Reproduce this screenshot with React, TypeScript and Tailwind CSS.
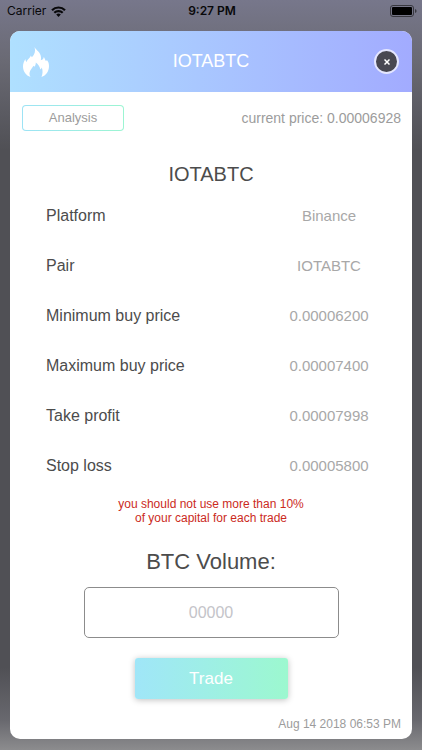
const details = [
  { label: 'Platform', value: 'Binance' },
  { label: 'Pair', value: 'IOTABTC' },
  { label: 'Minimum buy price', value: '0.00006200' },
  { label: 'Maximum buy price', value: '0.00007400' },
  { label: 'Take profit', value: '0.00007998' },
  { label: 'Stop loss', value: '0.00005800' },
]

function WifiIcon() {
  return (
    <svg viewBox="0 0 15 11" className="h-[11px] w-[15px]" aria-hidden="true">
      <g fill="none" stroke="#08080a" strokeWidth="2.2">
        <path d="M1 4.2a9.2 9.2 0 0 1 13 0" />
        <path d="M3.3 6.8a6 6 0 0 1 8.4 0" />
      </g>
      <path d="M7.5 10.9 5.2 8.6a3.3 3.3 0 0 1 4.6 0z" fill="#08080a" />
    </svg>
  )
}

function BatteryIcon() {
  return (
    <svg viewBox="0 0 27 12" className="h-3 w-[27px]" aria-hidden="true">
      <rect
        x="0.5"
        y="0.5"
        width="23"
        height="11"
        rx="2.5"
        fill="none"
        stroke="#38383f"
      />
      <rect x="2" y="2" width="20" height="8" rx="1" fill="#000" />
      <path d="M25 4q1.6.6 1.6 2T25 8z" fill="#38383f" />
    </svg>
  )
}

function FlameIcon() {
  return (
    <svg viewBox="0 0 26 30" className="h-[30px] w-[26px]" aria-hidden="true">
      <path
        fill="#fff"
        d="M11.5 0C13 3.2 18 5.500 18 10.500c0 1.200 0 2-.2 2.800 1.800-.5 2.700-1.500 3-3.300 1 1.500 1.400 3 2.200 4.200l.9-1.200C25.500 14.800 26 16.800 26 19c0 5.300-3 9.500-7.500 11 1.300-3.200 1.400-6.500.3-9.500-.4.9-.9 1.500-1.500 1.900-.4-2.700-1.900-5-4.500-6.900.1 1.900-.5 3.100-1.500 4.300l-.8-1C9.500 21 7 22.800 6.500 26c-.1 1.500.2 2.800 1 4C3 28.500 0 24.500 0 19.500c0-2.700.8-5 2.500-7.500 0 1.300.3 2.300 1.200 3C4 12 7.300 11.500 7.700 8.500l1.200 1.700C11.800 7.500 12.800 4 11.500 0z"
      />
    </svg>
  )
}

function StatusBar() {
  return (
    <div className="grid h-[22px] grid-cols-3 items-center pr-[5px] pl-[7px] text-[#08080a]">
      <div className="flex items-center gap-[5px] font-[Inter,sans-serif] text-[12px]">
        Carrier
        <WifiIcon />
      </div>
      <div className="text-center font-[Inter,sans-serif] text-[12px] font-semibold">
        9:27 PM
      </div>
      <div className="flex justify-end">
        <BatteryIcon />
      </div>
    </div>
  )
}

function CardHeader() {
  return (
    <header className="grid h-[61px] grid-cols-3 items-center bg-linear-to-r from-[#afe0ff] to-[#a2abff] px-[13px]">
      <FlameIcon />
      <h1 className="text-center text-[18px] text-white">IOTABTC</h1>
      <button
        type="button"
        aria-label="Close"
        className="flex size-[25px] items-center justify-center justify-self-end rounded-full border-2 border-[#e4e6ff] bg-[#484852]"
      >
        <svg viewBox="0 0 6 6" className="size-[6px]" aria-hidden="true">
          <path d="M.5.5l5 5M5.5.5l-5 5" stroke="#fff" strokeWidth="1.5" />
        </svg>
      </button>
    </header>
  )
}

export default function App() {
  return (
    <div className="flex min-h-screen flex-col bg-[linear-gradient(to_bottom,#77778b,#6a6a74_8%,#505055_20%,#505055_89%,#68686e_96%,#8c8c8e)] font-['Liberation_Sans',Arial,sans-serif]">
      <StatusBar />
      <main className="mx-[10px] mt-[9px] mb-[11px] flex grow flex-col overflow-hidden rounded-[10px] bg-white text-[#4c4c4c]">
        <CardHeader />
        <div className="flex items-center justify-between pt-[13px] pr-[11px] pl-3">
          <div className="rounded-[4px] bg-linear-to-r from-[#9de3f5] to-[#9cf5d2] p-px">
            <button
              type="button"
              className="block h-6 w-[100px] rounded-[3px] bg-white text-[13px] text-[#9c9c9c]"
            >
              Analysis
            </button>
          </div>
          <p className="text-[14px] text-[#9c9c9c]">
            current price: 0.00006928
          </p>
        </div>

        <h2 className="mt-[29px] text-center text-[20px] leading-[28px]">
          IOTABTC
        </h2>
        <dl className="mt-[3px] pr-[31px] pl-9">
          {details.map(d => (
            <div key={d.label} className="flex h-[50px] items-center justify-between">
              <dt className="text-[16px]">{d.label}</dt>
              <dd className="w-[104px] text-center text-[15px] text-[#a8a8a8]">
                {d.value}
              </dd>
            </div>
          ))}
        </dl>

        <p className="mt-[6px] text-center text-[12px] leading-[14px] text-[#cb2a1d]">
          you should not use more than 10%
          <br />
          of your capital for each trade
        </p>

        <form className="flex flex-col items-center">
          <label htmlFor="volume" className="mt-[23px] text-[22px] leading-[28px]">
            BTC Volume:
          </label>
          <input
            id="volume"
            type="text"
            inputMode="decimal"
            placeholder="00000"
            className="mt-[11px] h-[51px] w-[255px] rounded-[5px] border border-[#8c8c8c] text-center text-[16px] outline-none placeholder:text-[#c4c4c9]"
          />
          <button
            type="button"
            className="mt-5 h-[41px] w-[153px] rounded-[3px] bg-linear-to-r from-[#a0e6f8] to-[#9cf8cf] text-[17px] text-white shadow-[0_1px_6px_rgba(0,0,0,0.25)]"
          >
            Trade
          </button>
        </form>

        <time
          dateTime="2018-08-14T18:53"
          className="mt-auto mr-[11px] mb-[6px] self-end text-[12px] leading-[18px] text-[#9c9c9c]"
        >
          Aug 14 2018 06:53 PM
        </time>
      </main>
    </div>
  )
}
